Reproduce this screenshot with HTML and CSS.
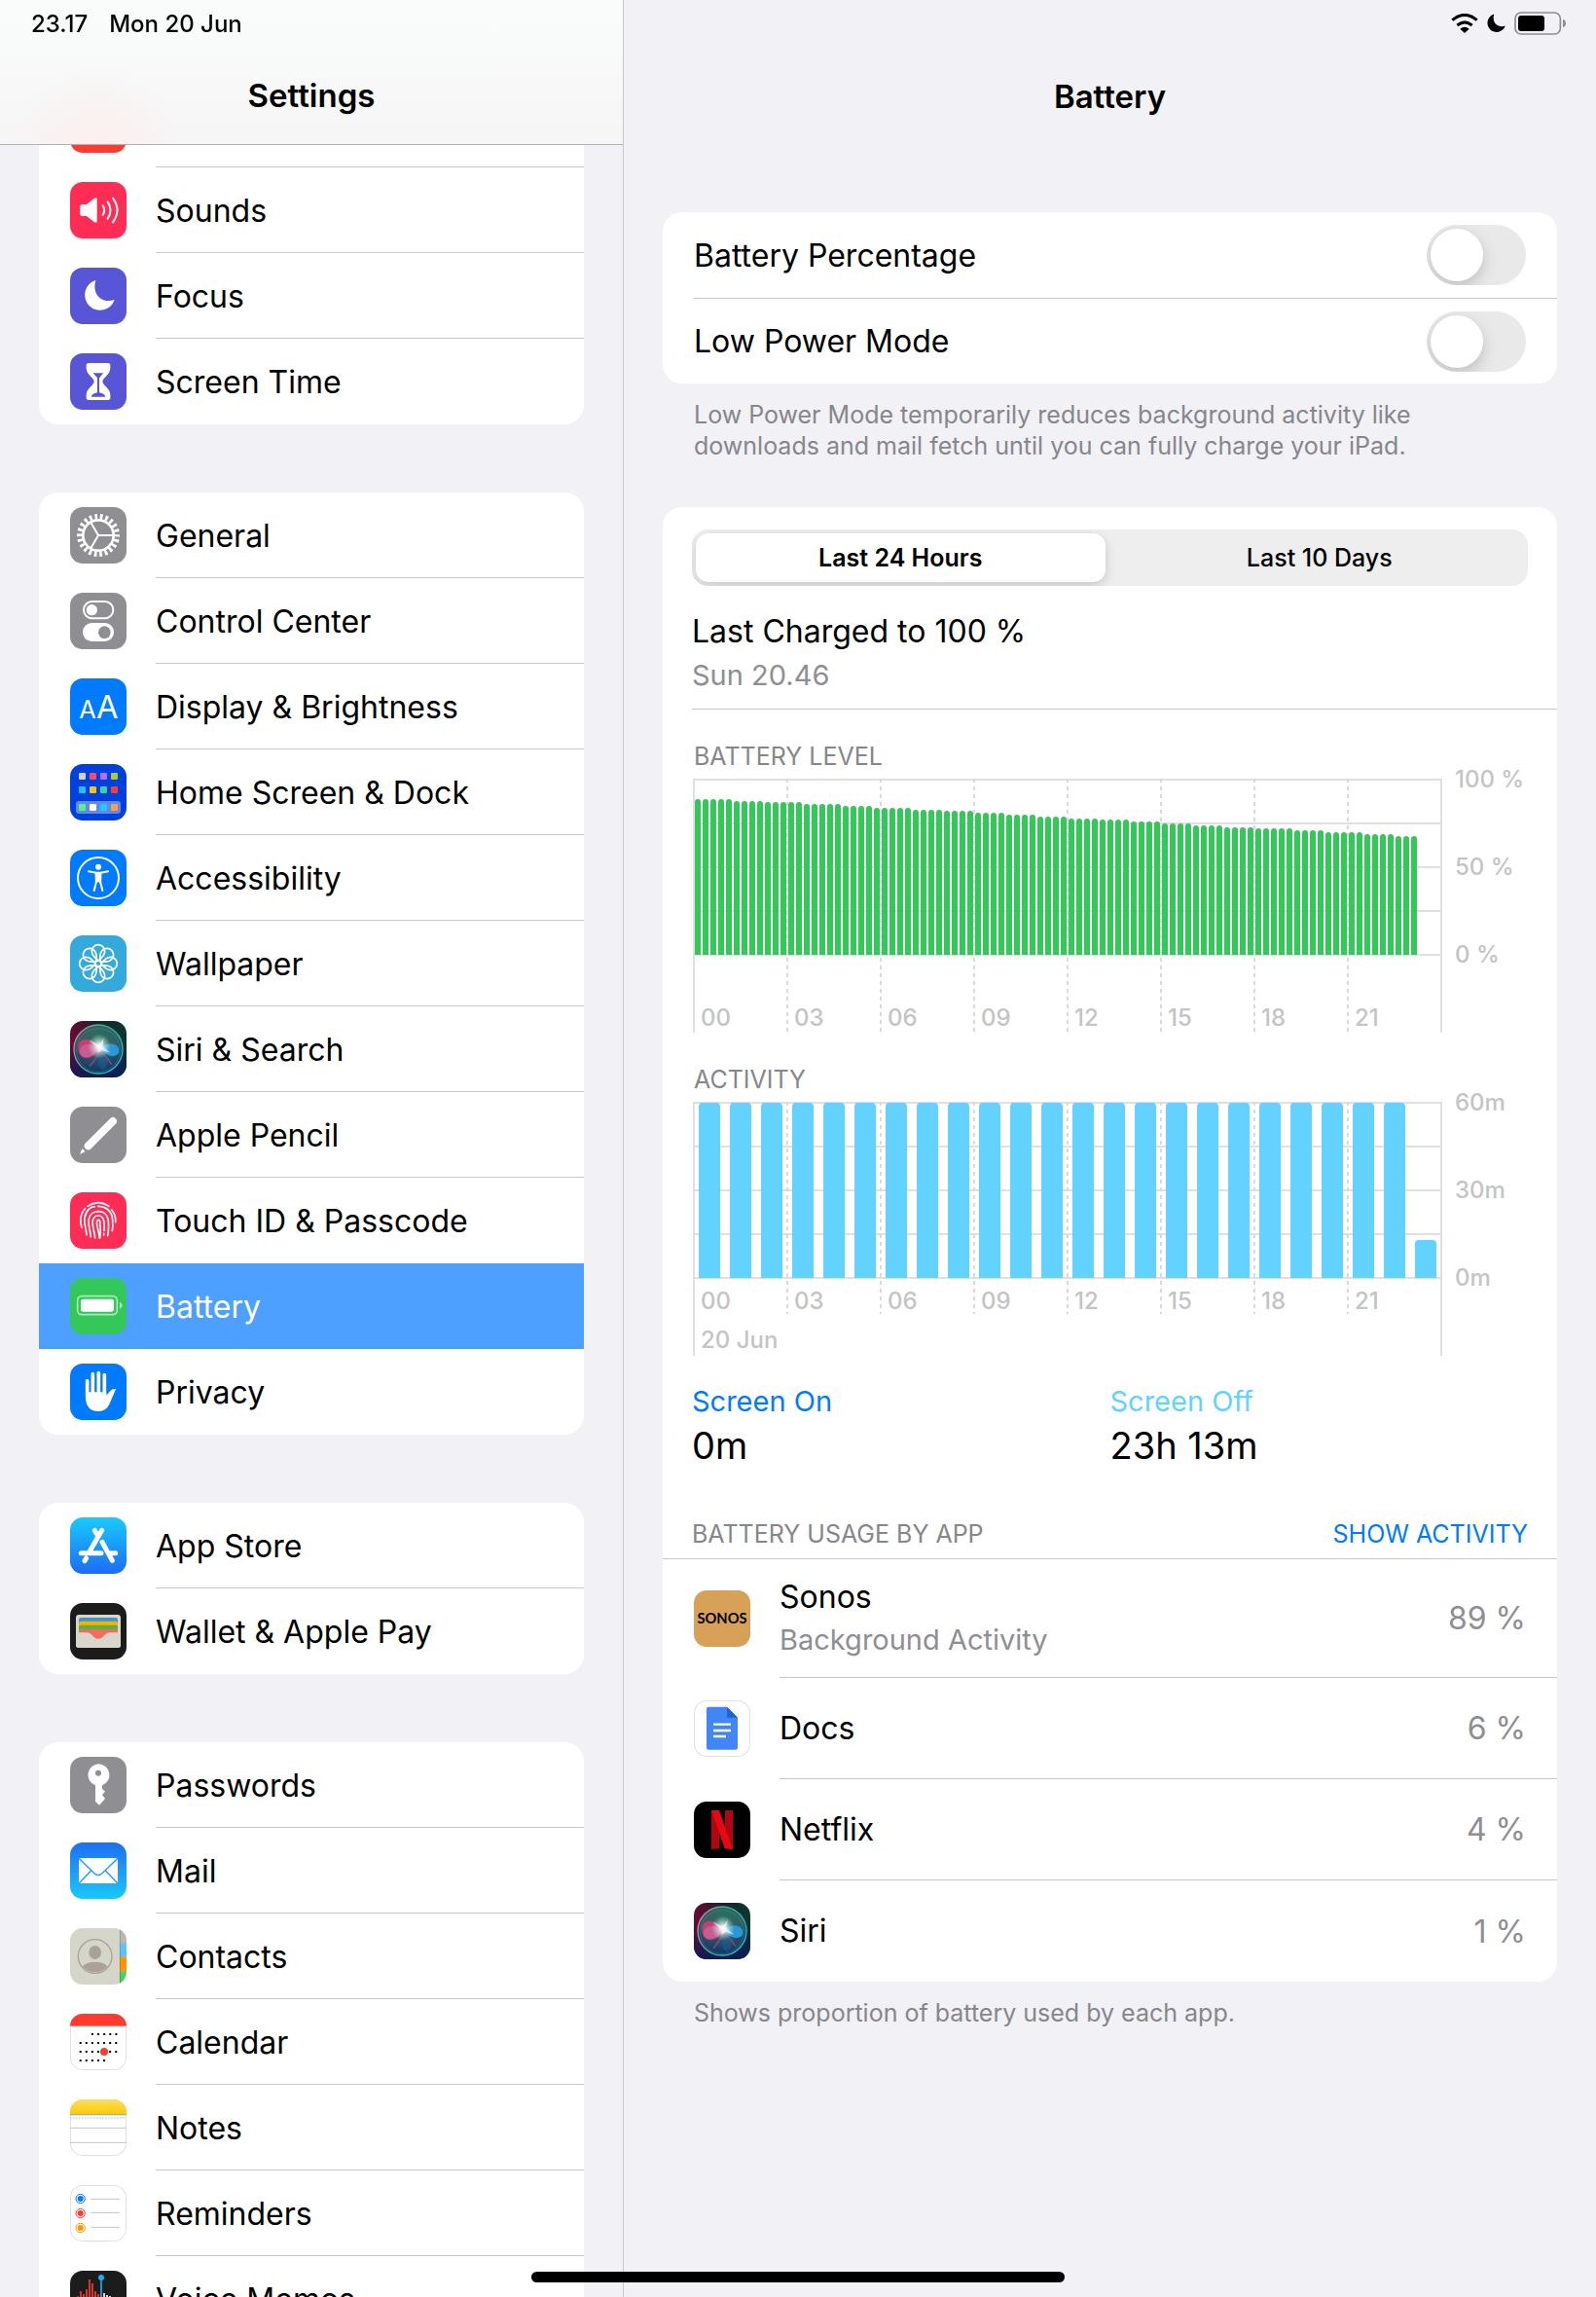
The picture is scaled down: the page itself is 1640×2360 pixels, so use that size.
FILE: index.html
```html
<!DOCTYPE html>
<html lang="en">
<head>
  <meta charset="UTF-8">
  <meta name="viewport" content="width=device-width, initial-scale=1.0">
  <title>Settings - Battery</title>
  <link rel="stylesheet" href="styles.css">
</head>
<body>
  <div class="status-bar">
    <span>23.17</span>
    <span>Mon 20 Jun</span>
    <div class="status-icons">
      <svg width="28" height="20" viewBox="0 0 84 60" fill="none" stroke="#000">
        <path d="M4 20Q42-12 80 20" stroke-width="9"/>
        <path d="M19 36Q42 17 65 36" stroke-width="9"/>
        <path d="M28 47Q42 36 56 47L42 60z" fill="#000" stroke="none"/>
      </svg>
      <svg width="19" height="20" viewBox="43 37 95 98"><path d="M79 39A47 47 0 1 0 137 99C100 112 66 84 79 39z"/></svg>
      <svg width="54" height="24" viewBox="0 0 162 72">
        <rect x="3" y="3" width="139" height="66" rx="18" fill="none" stroke="#8e8e92" stroke-width="5"/>
        <rect x="12" y="12" width="81" height="48" rx="9"/>
        <path d="M150 23q9 4 9 13t-9 13z" fill="#8e8e92"/>
      </svg>
    </div>
  </div>

  <aside class="sidebar">
    <header class="bar sidebar-bar"><h1>Settings</h1></header>

    <nav class="menu">
      <div class="group">
        <a class="item" href="#notifications" aria-label="Notifications">
          <span class="icon red"></span>
          <span class="label"></span>
        </a>
        <a class="item" href="#sounds">
          <svg class="icon pink" viewBox="0 0 174 174" fill="none" stroke="#fff" stroke-width="6" stroke-linecap="round">
            <path d="M31 76q0-7 7-7h13l24-19q8-4 8 3v68q0 7-8 3l-24-19h-13q-7 0-7-7z" fill="#fff" stroke="none"/>
            <path d="M101 73q9 14 0 28M116 61q17 26 0 52M132 50q27 37 0 74"/>
          </svg>
          <span class="label">Sounds</span>
        </a>
        <a class="item" href="#focus">
          <svg class="icon indigo" viewBox="0 0 174 174"><path d="M79 39A47 47 0 1 0 137 99C100 112 66 84 79 39z" fill="#fff"/></svg>
          <span class="label">Focus</span>
        </a>
        <a class="item" href="#screen-time">
          <svg class="icon indigo" viewBox="0 0 174 174">
            <path d="M57 30h60q7 0 7 8v8c0 20-24 30-24 41s24 21 24 41v8q0 8-7 8H57q-7 0-7-8v-8c0-20 24-30 24-41S50 66 50 46v-8q0-8 7-8z" fill="#fff"/>
            <path d="M71 61h32l-13 15v45q16 3 19 13H65q3-10 19-13V76z" fill="#5856d6"/>
          </svg>
          <span class="label">Screen Time</span>
        </a>
      </div>

      <div class="group">
        <a class="item" href="#general">
          <svg class="icon gray" viewBox="0 0 174 174" fill="none" stroke="#fff">
            <circle cx="87" cy="87" r="47" stroke-width="8"/>
            <circle cx="87" cy="87" r="58" stroke-width="16" pathLength="220" stroke-dasharray="5 5" stroke-dashoffset="2.5"/>
            <path d="M87 87h46M87 87L64 47M87 87L64 127" stroke-width="6"/>
          </svg>
          <span class="label">General</span>
        </a>
        <a class="item" href="#control-center">
          <svg class="icon gray" viewBox="0 0 174 174">
            <rect x="42" y="27" width="91" height="52" rx="26" fill="none" stroke="#fff" stroke-width="6"/>
            <circle cx="67" cy="53" r="17" fill="#fff"/>
            <rect x="39" y="93" width="96" height="57" rx="28" fill="#fff"/>
            <circle cx="106" cy="122" r="19" fill="#8e8e93"/>
          </svg>
          <span class="label">Control Center</span>
        </a>
        <a class="item" href="#display">
          <svg class="icon blue" viewBox="0 0 174 174" fill="#fff">
            <text class="glyph" x="28" y="123" font-size="76">A</text>
            <text class="glyph" x="81" y="123" font-size="98">A</text>
          </svg>
          <span class="label">Display &amp; Brightness</span>
        </a>
        <a class="item" href="#home-screen">
          <svg class="icon home" viewBox="0 0 174 174">
            <rect x="18" y="114" width="138" height="39" rx="9" fill="#fff" opacity=".38"/>
            <rect x="27" y="27" width="21" height="21" rx="4" fill="#d5d3cb"/>
            <rect x="60" y="27" width="21" height="21" rx="4" fill="#ff4b62"/>
            <rect x="93" y="27" width="21" height="21" rx="4" fill="#b66cff"/>
            <rect x="126" y="27" width="21" height="21" rx="4" fill="#b0cc30"/>
            <rect x="27" y="69" width="21" height="21" rx="4" fill="#1cc3fb"/>
            <rect x="60" y="69" width="21" height="21" rx="4" fill="#ffc107"/>
            <rect x="93" y="69" width="21" height="21" rx="4" fill="#3bd3a0"/>
            <rect x="126" y="69" width="21" height="21" rx="4" fill="#ff3b30"/>
            <rect x="27" y="123" width="21" height="21" rx="4" fill="#5af47c"/>
            <rect x="60" y="123" width="21" height="21" rx="4" fill="#fff"/>
            <rect x="93" y="123" width="21" height="21" rx="4" fill="#1ecbff"/>
            <rect x="126" y="123" width="21" height="21" rx="4" fill="#ff9d45"/>
          </svg>
          <span class="label">Home Screen &amp; Dock</span>
        </a>
        <a class="item" href="#accessibility">
          <svg class="icon blue" viewBox="0 0 174 174" fill="none" stroke="#fff" stroke-width="6" stroke-linecap="round">
            <circle cx="87" cy="87" r="63"/>
            <circle cx="87" cy="53" r="9" fill="#fff" stroke="none"/>
            <path d="M57 67l23 4h14l23-4M81 98l-7 28M93 98l7 28"/>
            <path d="M77 69h20v20l-1 16-9-6-9 6-1-16z" fill="#fff" stroke="none"/>
          </svg>
          <span class="label">Accessibility</span>
        </a>
        <a class="item" href="#wallpaper">
          <svg class="icon cyan" viewBox="0 0 174 174" fill="none" stroke="#fff" stroke-width="5">
            <defs><path id="petal" d="M87 78C71 66 67 54 67 49A20 20 0 0 1 107 49C107 54 103 66 87 78z"/></defs>
            <use href="#petal"/>
            <use href="#petal" transform="rotate(45 87 87)"/>
            <use href="#petal" transform="rotate(90 87 87)"/>
            <use href="#petal" transform="rotate(135 87 87)"/>
            <use href="#petal" transform="rotate(180 87 87)"/>
            <use href="#petal" transform="rotate(225 87 87)"/>
            <use href="#petal" transform="rotate(270 87 87)"/>
            <use href="#petal" transform="rotate(315 87 87)"/>
            <circle cx="87" cy="87" r="9"/>
          </svg>
          <span class="label">Wallpaper</span>
        </a>
        <a class="item" href="#siri">
          <svg class="icon" viewBox="0 0 174 174">
            <defs>
              <linearGradient id="siri-bg" x1="0" y1="0" x2="1" y2="0">
                <stop offset="0" stop-color="#6a0a30"/><stop offset=".5" stop-color="#1c2230"/><stop offset="1" stop-color="#08382f"/>
              </linearGradient>
              <linearGradient id="siri-floor" x1="0" y1="0" x2="0" y2="1">
                <stop offset=".4" stop-color="#0a1560" stop-opacity="0"/><stop offset="1" stop-color="#0a1c5c" stop-opacity=".9"/>
              </linearGradient>
              <linearGradient id="siri-ring" x1="0" y1="0" x2="1" y2=".4">
                <stop offset="0" stop-color="#e08a9c"/><stop offset=".55" stop-color="#2fb48a"/><stop offset="1" stop-color="#2fb7c4"/>
              </linearGradient>
              <radialGradient id="siri-glow">
                <stop offset="0" stop-color="#fff"/><stop offset=".25" stop-color="#fff" stop-opacity=".8"/><stop offset="1" stop-color="#bfe9e4" stop-opacity="0"/>
              </radialGradient>
              <radialGradient id="siri-orb" cx=".5" cy=".2" r=".8">
                <stop offset="0" stop-color="#2b8a6c"/><stop offset=".5" stop-color="#3b6f78"/><stop offset="1" stop-color="#103a6b"/>
              </radialGradient>
              <g id="siri-mark">
                <rect width="174" height="174" fill="url(#siri-bg)"/>
                <rect width="174" height="174" fill="url(#siri-floor)"/>
                <circle cx="87" cy="87" r="75" fill="url(#siri-orb)" fill-opacity=".75" stroke="url(#siri-ring)" stroke-width="4"/>
                <circle cx="87" cy="90" r="67" fill="none" stroke="#58b6a4" stroke-width="1.5" opacity=".6"/>
                <path d="M91 88C70 50 26 44 25 82S62 128 91 88z" fill="#dc3b74" opacity=".85"/>
                <path d="M91 88C66 62 30 70 30 92s28 32 61-4z" fill="#c86aa0" opacity=".7"/>
                <path d="M91 86c24-24 60-18 60 5s-34 24-60-5z" fill="#2a9fe6" opacity=".9"/>
                <path d="M91 88C84 110 70 130 60 140M91 88c14 14 24 28 38 46" fill="none" stroke="#c74a86" stroke-width="5" opacity=".55"/>
                <path d="M91 88C80 112 84 140 100 152 124 140 120 104 91 88z" fill="#1a6fb0" opacity=".35"/>
                <ellipse cx="90" cy="78" rx="36" ry="38" fill="url(#siri-glow)"/>
                <path d="M58 58l32 16 14-22-4 26 24 20-26-8-12 8 0-14z" fill="#fff" opacity=".6"/>
              </g>
            </defs>
            <use href="#siri-mark"/>
          </svg>
          <span class="label">Siri &amp; Search</span>
        </a>
        <a class="item" href="#pencil">
          <svg class="icon gray" viewBox="0 0 174 174">
            <path d="M132 45L56 121" stroke="#fff" stroke-width="24" stroke-linecap="round"/>
            <path d="M30 147l7-17q7 3 9 9z" fill="#fff"/>
          </svg>
          <span class="label">Apple Pencil</span>
        </a>
        <a class="item" href="#touch-id">
          <svg class="icon pink" viewBox="0 0 174 174" fill="none" stroke="#fff" stroke-width="5" stroke-linecap="round">
            <path d="M54 43Q87 21 120 43M46 50C30 68 30 90 36 109M128 54C138 66 142 78 140 92"/>
            <path d="M51 131C50 112 42 98 45 78 50 53 66 44 76 44M86 43C108 43 130 56 131 86 132 98 132 108 130 119"/>
            <path d="M64 138C63 118 54 100 58 82 64 52 110 50 117 82 120 98 119 116 116 134"/>
            <path d="M77 141C76 122 67 104 70 87 75 66 101 68 104 88 107 102 106 110 105 118M104 127v5"/>
            <path d="M90 141C91 122 80 104 83 90 86 80 93 86 93 95M92 141C93 126 96 112 92 100"/>
          </svg>
          <span class="label">Touch ID &amp; Passcode</span>
        </a>
        <a class="item selected" href="#battery" aria-current="page">
          <svg class="icon green" viewBox="0 0 174 174">
            <rect x="23" y="56" width="122" height="57" rx="13" fill="none" stroke="#fff" stroke-width="5" opacity=".6"/>
            <rect x="33" y="65" width="102" height="39" rx="7" fill="#fff"/>
            <path d="M153 74q8 4 8 11t-8 11z" fill="#fff" opacity=".6"/>
          </svg>
          <span class="label">Battery</span>
        </a>
        <a class="item" href="#privacy">
          <svg class="icon blue" viewBox="0 0 174 174" fill="#fff">
            <path d="M53 53v50M70 32v60M88 29v60M106 35v60" stroke="#fff" stroke-width="11" stroke-linecap="round"/>
            <path d="M48 88h64v10l12-14q8-8 18-5-4 6-8 16l-12 28q-10 24-35 24-39 0-39-45z"/>
          </svg>
          <span class="label">Privacy</span>
        </a>
      </div>

      <div class="group">
        <a class="item" href="#app-store">
          <svg class="icon store" viewBox="0 0 174 174" stroke="#fff" stroke-width="15" stroke-linecap="round">
            <path d="M76 40l6 11M98 40L59 107M99 76l31 57M34 110h62M120 110h20M50 126l-5 8" fill="none"/>
          </svg>
          <span class="label">App Store</span>
        </a>
        <a class="item" href="#wallet">
          <svg class="icon wallet" viewBox="0 0 174 174">
            <rect x="18" y="36" width="138" height="102" rx="9" fill="#d9d6cb"/>
            <rect x="27" y="45" width="120" height="30" rx="7" fill="#3c97c9"/>
            <rect x="27" y="56" width="120" height="30" rx="6" fill="#ffae00"/>
            <rect x="27" y="68" width="120" height="30" rx="6" fill="#4bb83f"/>
            <rect x="27" y="80" width="120" height="34" rx="6" fill="#f26d5f"/>
            <path d="M18 91h34q10 0 16 8 8 11 19 11t19-11q6-8 16-8h34v38q0 9-9 9H27q-9 0-9-9z" fill="#d9d6cb"/>
          </svg>
          <span class="label">Wallet &amp; Apple Pay</span>
        </a>
      </div>

      <div class="group">
        <a class="item" href="#passwords">
          <svg class="icon gray" viewBox="0 0 174 174">
            <path d="M87 22a34 34 0 0 1 12 66v10l9 9-9 10 9 12-18 20-12-11V88A34 34 0 0 1 87 22z" fill="#fff"/>
            <circle cx="87" cy="50" r="9" fill="#8e8e93"/>
          </svg>
          <span class="label">Passwords</span>
        </a>
        <a class="item" href="#mail">
          <svg class="icon mail" viewBox="0 0 174 174">
            <rect x="27" y="48" width="120" height="78" rx="3" fill="#fff"/>
            <path d="M27 49l48 46q12 11 24 0l48-46M28 125l36-37M146 125l-36-37" fill="none" stroke="#1c96f8" stroke-width="4"/>
          </svg>
          <span class="label">Mail</span>
        </a>
        <a class="item" href="#contacts">
          <svg class="icon" viewBox="0 0 174 174">
            <rect width="174" height="174" fill="#d6d5ca"/>
            <rect x="153" width="21" height="46" fill="#bcb8b1"/>
            <rect x="153" y="46" width="21" height="42" fill="#5ac4fa"/>
            <rect x="153" y="88" width="21" height="45" fill="#ff9500"/>
            <rect x="153" y="133" width="21" height="41" fill="#4cd15f"/>
            <path d="M154 4v166" stroke="#0003" stroke-width="3"/>
            <circle cx="77" cy="87" r="52" fill="none" stroke="#aaa199" stroke-width="4"/>
            <ellipse cx="77" cy="75" rx="19" ry="21" fill="#aaa199"/>
            <path d="M38 118q12-14 39-14t39 14a52 52 0 0 1-78 0z" fill="#aaa199"/>
          </svg>
          <span class="label">Contacts</span>
        </a>
        <a class="item" href="#calendar">
          <svg class="icon paper" viewBox="0 0 174 174" fill="none" stroke="#000" stroke-width="6" stroke-dasharray="6 12.3">
            <rect width="174" height="38" fill="#ff3b30" stroke="none"/>
            <path d="M66 63h80M29 90h117M29 117h117M29 144h80"/>
            <circle cx="105" cy="117" r="12" fill="#ff3b30" stroke="none"/>
          </svg>
          <span class="label">Calendar</span>
        </a>
        <a class="item" href="#notes">
          <svg class="icon paper" viewBox="0 0 174 174" fill="none">
            <defs>
              <linearGradient id="notes-top" x1="0" y1="0" x2="0" y2="1">
                <stop offset="0" stop-color="#ffdc5c"/><stop offset="1" stop-color="#fdcb05"/>
              </linearGradient>
            </defs>
            <rect width="174" height="45" fill="url(#notes-top)"/>
            <path d="M0 47h174" stroke="#a9a9a9" stroke-width="4"/>
            <path d="M0 57h174" stroke="#d4d4d4" stroke-width="5" stroke-dasharray="5 4"/>
            <path d="M0 88h174M0 133h174" stroke="#c4c4c6" stroke-width="3"/>
          </svg>
          <span class="label">Notes</span>
        </a>
        <a class="item" href="#reminders">
          <svg class="icon paper" viewBox="0 0 174 174" fill="none" stroke-width="3">
            <circle cx="32" cy="42" r="14" stroke="#007aff"/><circle cx="32" cy="42" r="9" fill="#007aff"/>
            <circle cx="32" cy="87" r="14" stroke="#ff3b30"/><circle cx="32" cy="87" r="9" fill="#ff3b30"/>
            <circle cx="32" cy="132" r="14" stroke="#ff9500"/><circle cx="32" cy="132" r="9" fill="#ff9500"/>
            <path d="M64 43h89M64 85h89M64 130h89" stroke="#c4c4c6"/>
          </svg>
          <span class="label">Reminders</span>
        </a>
        <a class="item" href="#voice-memos">
          <svg class="icon dark" viewBox="0 0 174 174" fill="none" stroke-width="5">
            <path d="M24 79v16M33 63v48M42 72v30M51 57v60M60 27v120M69 39v96M78 63v48M87 72v30" stroke="#ff3b30"/>
            <path d="M105 69v36M114 75v24M123 78v18M132 81v12M141 83v8" stroke="#fff"/>
            <path d="M96 20v134" stroke="#1badf8"/>
            <circle cx="96" cy="21" r="9" fill="#1badf8"/>
          </svg>
          <span class="label">Voice Memos</span>
        </a>
      </div>
    </nav>
  </aside>

  <main class="detail">
    <header class="bar"><h1>Battery</h1></header>

    <section class="group toggles">
      <div class="toggle-row">
        <label for="percentage">Battery Percentage</label>
        <input class="switch" type="checkbox" role="switch" id="percentage">
      </div>
      <div class="toggle-row">
        <label for="low-power">Low Power Mode</label>
        <input class="switch" type="checkbox" role="switch" id="low-power">
      </div>
    </section>
    <p class="note power-note">Low Power Mode temporarily reduces background activity like downloads and mail fetch until you can fully charge your iPad.</p>

    <section class="group stats">
      <div class="segmented">
        <button type="button" class="active">Last 24 Hours</button>
        <button type="button">Last 10 Days</button>
      </div>

      <div class="charged">
        <h2>Last Charged to 100 %</h2>
        <p>Sun 20.46</p>
      </div>

      <h3 class="caption chart-title">Battery Level</h3>
      <div class="chart">
        <div class="plot">
          <div class="lines"></div>
          <div class="hours">
            <span>00</span><span>03</span><span>06</span><span>09</span><span>12</span><span>15</span><span>18</span><span>21</span>
          </div>
          <div class="bars level" id="level"></div>
        </div>
        <div class="scale"><span>100 %</span><span>50 %</span><span>0 %</span></div>
      </div>

      <h3 class="caption chart-title">Activity</h3>
      <div class="chart">
        <div class="plot">
          <div class="lines"></div>
          <div class="hours short">
            <span>00</span><span>03</span><span>06</span><span>09</span><span>12</span><span>15</span><span>18</span><span>21</span>
          </div>
          <div class="bars activity" id="activity"></div>
          <div class="date">20 Jun</div>
        </div>
        <div class="scale"><span>60m</span><span>30m</span><span>0m</span></div>
      </div>

      <dl class="screen">
        <div>
          <dt class="on">Screen On</dt>
          <dd>0m</dd>
        </div>
        <div>
          <dt class="off">Screen Off</dt>
          <dd>23h 13m</dd>
        </div>
      </dl>

      <div class="usage-head">
        <h3 class="caption">Battery Usage by App</h3>
        <button type="button" class="caption">Show Activity</button>
      </div>
      <ul class="usage">
        <li>
          <svg class="icon sonos" viewBox="0 0 174 174"><text class="wordmark" x="87" y="102" text-anchor="middle" font-size="44">SONOS</text></svg>
          <div class="app tall">
            <div>
              <div class="name">Sonos</div>
              <div class="sub">Background Activity</div>
            </div>
            <span class="share">89 %</span>
          </div>
        </li>
        <li>
          <svg class="icon paper" viewBox="0 0 174 174">
            <path d="M45 20h57l33 33v93q0 6-6 6H45q-6 0-6-6V26q0-6 6-6z" fill="#4285f4"/>
            <path d="M102 20l33 33h-33z" fill="#1967d2"/>
            <path d="M60 74h54M60 93h54M60 111h39" stroke="#fff" stroke-width="7"/>
          </svg>
          <div class="app"><span class="name">Docs</span><span class="share">6 %</span></div>
        </li>
        <li>
          <svg class="icon black" viewBox="0 0 174 174">
            <path d="M54 27h24v118l-24 2zM96 27h24v120l-24-2z" fill="#b1060f"/>
            <path d="M54 27h24l42 120-25-3z" fill="#e50914"/>
          </svg>
          <div class="app"><span class="name">Netflix</span><span class="share">4 %</span></div>
        </li>
        <li>
          <svg class="icon" viewBox="0 0 174 174"><use href="#siri-mark"/></svg>
          <div class="app"><span class="name">Siri</span><span class="share">1 %</span></div>
        </li>
      </ul>
    </section>
    <p class="note">Shows proportion of battery used by each app.</p>
  </main>

  <div class="home-indicator"></div>

  <script src="script.js"></script>
</body>
</html>
```
FILE: styles.css
```css
* {
  box-sizing: border-box;
}
body {
  margin: 0;
  height: 100vh;
  overflow: hidden;
  display: grid;
  grid-template-columns: 641px 1fr;
  background: #f2f1f6;
  color: #000;
  font-family: Inter, "Liberation Sans", sans-serif;
  font-size: 32px;
}
h1, h2, h3, p, ul, dl, dd {
  margin: 0;
  padding: 0;
  font-weight: 400;
}
button {
  font: inherit;
  color: inherit;
  border: none;
  background: none;
  padding: 0;
  cursor: pointer;
}

/* status bar */
.status-bar {
  position: fixed;
  z-index: 3;
  top: 0;
  left: 0;
  right: 0;
  height: 48px;
  padding: 0 30px 0 32px;
  display: flex;
  align-items: center;
  gap: 22px;
  font-size: 24px;
  font-weight: 500;
}
.status-icons {
  margin-left: auto;
  display: flex;
  align-items: center;
  gap: 9px;
}

.bar {
  height: 149px;
  padding-top: 48px;
  display: flex;
  align-items: center;
  justify-content: center;
}
.bar h1 {
  font-size: 33px;
  font-weight: 600;
}

/* sidebar */
.sidebar {
  position: relative;
  height: 100vh;
  overflow: hidden;
  border-right: 1px solid #c9c9cd;
}
.sidebar-bar {
  position: absolute;
  z-index: 2;
  top: 0;
  left: 0;
  right: 0;
  border-bottom: 1px solid #b0b0b4;
  background:
    radial-gradient(circle at 100px 160px, #fdeeed, transparent 90px),
    linear-gradient(#fafbfb, #f6f6f6);
}
.menu {
  padding: 84px 40px 0;
  display: flex;
  flex-direction: column;
  gap: 70px;
}
.group {
  background: #fff;
  border-radius: 20px;
  overflow: hidden;
}
.item {
  display: flex;
  align-items: center;
  gap: 30px;
  height: 88px;
  padding-left: 32px;
  color: inherit;
  text-decoration: none;
}
.label {
  flex: 1;
  height: 88px;
  line-height: 89px;
  border-bottom: 1px solid #c6c6c8;
}
.item:last-child .label,
.item.selected .label,
.item:has(+ .selected) .label {
  border-bottom-color: transparent;
}
.item.selected {
  background: #4da0ff;
  color: #fff;
}

/* icons */
.icon {
  flex: none;
  width: 58px;
  height: 58px;
  border-radius: 13px;
  overflow: hidden;
}
.red { background: #ff3b30; }
.pink { background: #ff2d55; }
.indigo { background: #5856d6; }
.gray { background: #8e8e93; }
.blue { background: #007aff; }
.home { background: #0040dd; }
.cyan { background: #34aadc; }
.green { background: #34c759; }
.store { background: linear-gradient(#1acafd, #1c6cf3); }
.mail { background: linear-gradient(#1e6ff2, #1ac8fc); }
.wallet, .dark { background: #1c1c1c; }
.black { background: #000; }
.sonos { background: #d8a158; }
.paper {
  background: #fff;
  box-shadow: inset 0 0 0 1px #e2e2e4;
}
.glyph {
  font-family: Inter, sans-serif;
  font-weight: 400;
}
.wordmark {
  font-family: Lato, sans-serif;
  font-weight: 700;
}

/* detail */
.detail {
  padding: 0 40px;
}
.toggles {
  margin-top: 69px;
  padding-left: 32px;
}
.toggle-row {
  display: flex;
  align-items: center;
  justify-content: space-between;
  height: 88px;
  padding-right: 32px;
}
.toggle-row + .toggle-row {
  border-top: 1px solid #c6c6c8;
}
.switch {
  appearance: none;
  margin: 0;
  width: 102px;
  height: 62px;
  padding: 4px;
  border-radius: 31px;
  background: #e9e9ea;
  overflow: hidden;
}
.switch::before {
  content: "";
  display: block;
  width: 54px;
  height: 54px;
  border-radius: 50%;
  background: #fff;
  box-shadow: 0 6px 16px rgba(0, 0, 0, 0.18);
}
.switch:checked {
  background: #34c759;
}
.switch:checked::before {
  margin-left: 40px;
}
.note {
  padding: 16px 32px 0;
  color: #86868b;
  font-size: 25px;
  line-height: 32px;
}
.power-note {
  max-width: 860px;
}

.stats {
  margin-top: 47px;
}
.segmented {
  display: grid;
  grid-template-columns: 1fr 1fr;
  gap: 10px;
  height: 58px;
  margin: 23px 30px 0;
  padding: 4px;
  border-radius: 16px;
  background: #eeeeef;
  overflow: hidden;
  font-size: 25px;
  font-weight: 500;
}
.segmented button {
  border-radius: 13px;
}
.segmented .active {
  background: #fff;
  font-weight: 600;
  box-shadow: 0 4px 12px rgba(0, 0, 0, 0.16);
}
.charged {
  margin: 24px 0 0 30px;
  padding-bottom: 12px;
  border-bottom: 1px solid #c6c6c8;
  line-height: 45px;
}
.charged h2 {
  font-size: 32px;
}
.charged p {
  color: #8e8e93;
  font-size: 29px;
}
.caption {
  color: #86868b;
  font-size: 25px;
  line-height: 32px;
  text-transform: uppercase;
}
.chart-title {
  margin: 32px 32px 7px;
}

/* charts */
.chart {
  display: grid;
  grid-template-columns: 1fr 88px;
  margin: 0 30px 0 31px;
  color: #c4c4c6;
  font-size: 24px;
  font-weight: 500;
}
.plot {
  display: grid;
  grid-template-rows: 218px 43px;
  border: solid #e0e0e1;
  border-width: 0 2px;
}
.lines, .hours, .bars {
  grid-column: 1;
  grid-row: 1;
}
.lines {
  height: 182px;
  background: repeating-linear-gradient(#e0e0e1 0 2px, transparent 2px 45px);
}
.hours {
  display: grid;
  grid-template-columns: repeat(8, 1fr);
  grid-row: 1 / 3;
  margin-left: -2px;
}
.hours.short {
  grid-row: 1;
}
.hours span {
  display: flex;
  align-items: flex-end;
  padding: 0 0 2px 8px;
  line-height: 26px;
  background: repeating-linear-gradient(#d9d9db 0 4px, transparent 4px 8px) 0 0 / 2px 100% no-repeat;
}
.hours.short span {
  padding-bottom: 0;
}
.hours span:first-child {
  background: none;
}
.bars {
  display: grid;
  align-items: end;
  height: 182px;
  margin-left: -2px;
  padding: 1px 0;
}
.level {
  grid-template-columns: repeat(96, 1fr);
}
.level i {
  margin-left: 2px;
  border-radius: 3px 3px 0 0;
  background: #34c759;
}
.activity {
  grid-template-columns: repeat(24, 1fr);
}
.activity i {
  margin: 0 4px 0 6px;
  border-radius: 4px 4px 0 0;
  background: #64d2ff;
}
.date {
  padding: 13px 0 0 6px;
  line-height: 28px;
}
.scale {
  display: flex;
  flex-direction: column;
  justify-content: space-between;
  height: 208px;
  margin-top: -13px;
  padding-left: 13px;
  line-height: 28px;
}

.screen {
  display: grid;
  grid-template-columns: 1fr 1fr;
  margin: 26px 30px 0;
}
.screen dt {
  font-size: 29px;
  line-height: 42px;
}
.screen dd {
  font-size: 38px;
  line-height: 48px;
}
.on { color: #007aff; }
.off { color: #64d2ff; }

/* usage by app */
.usage-head {
  display: flex;
  justify-content: space-between;
  margin-top: 51px;
  padding: 0 30px 9px;
  border-bottom: 1px solid #c6c6c8;
}
.usage-head button {
  color: #007aff;
}
.usage {
  list-style: none;
}
.usage li {
  display: flex;
  align-items: center;
  gap: 30px;
  padding-left: 32px;
}
.app {
  flex: 1;
  display: flex;
  align-items: center;
  justify-content: space-between;
  height: 104px;
  padding-right: 32px;
  border-bottom: 1px solid #c6c6c8;
}
.app.tall {
  height: 122px;
}
.usage li:last-child .app {
  border-bottom: none;
}
.name {
  line-height: 44px;
}
.sub {
  color: #8e8e93;
  font-size: 29px;
  line-height: 44px;
}
.share {
  color: #8e8e93;
}

.home-indicator {
  position: fixed;
  z-index: 4;
  bottom: 15px;
  left: 33.3%;
  right: 33.3%;
  height: 11px;
  border-radius: 6px;
  background: #000;
}
```
FILE: script.js
```js
// [battery level in percent, number of 15 minute readings at that level]
const levels = [
  [89, 5], [88, 4], [87, 5], [86, 5], [85, 4], [84, 5], [83, 4], [82, 4],
  [81, 4], [80, 4], [79, 4], [78, 4], [77, 4], [76, 4], [75, 4], [74, 4],
  [73, 4], [72, 5], [71, 4], [70, 5], [69, 4], [68, 3]
];
// minutes of activity in each hour
const minutes = Array(23).fill(60).concat(13);

function addBar(parent, percent) {
  const bar = document.createElement('i');
  bar.style.height = percent + '%';
  parent.appendChild(bar);
}

const level = document.getElementById('level');
levels.forEach(([value, count]) => {
  for (let i = 0; i < count; i++) addBar(level, value);
});

const activity = document.getElementById('activity');
minutes.forEach(m => addBar(activity, m / 60 * 100));

document.querySelectorAll('.segmented button').forEach(button => {
  button.onclick = () => {
    document.querySelector('.segmented .active').classList.remove('active');
    button.classList.add('active');
  };
});
```
